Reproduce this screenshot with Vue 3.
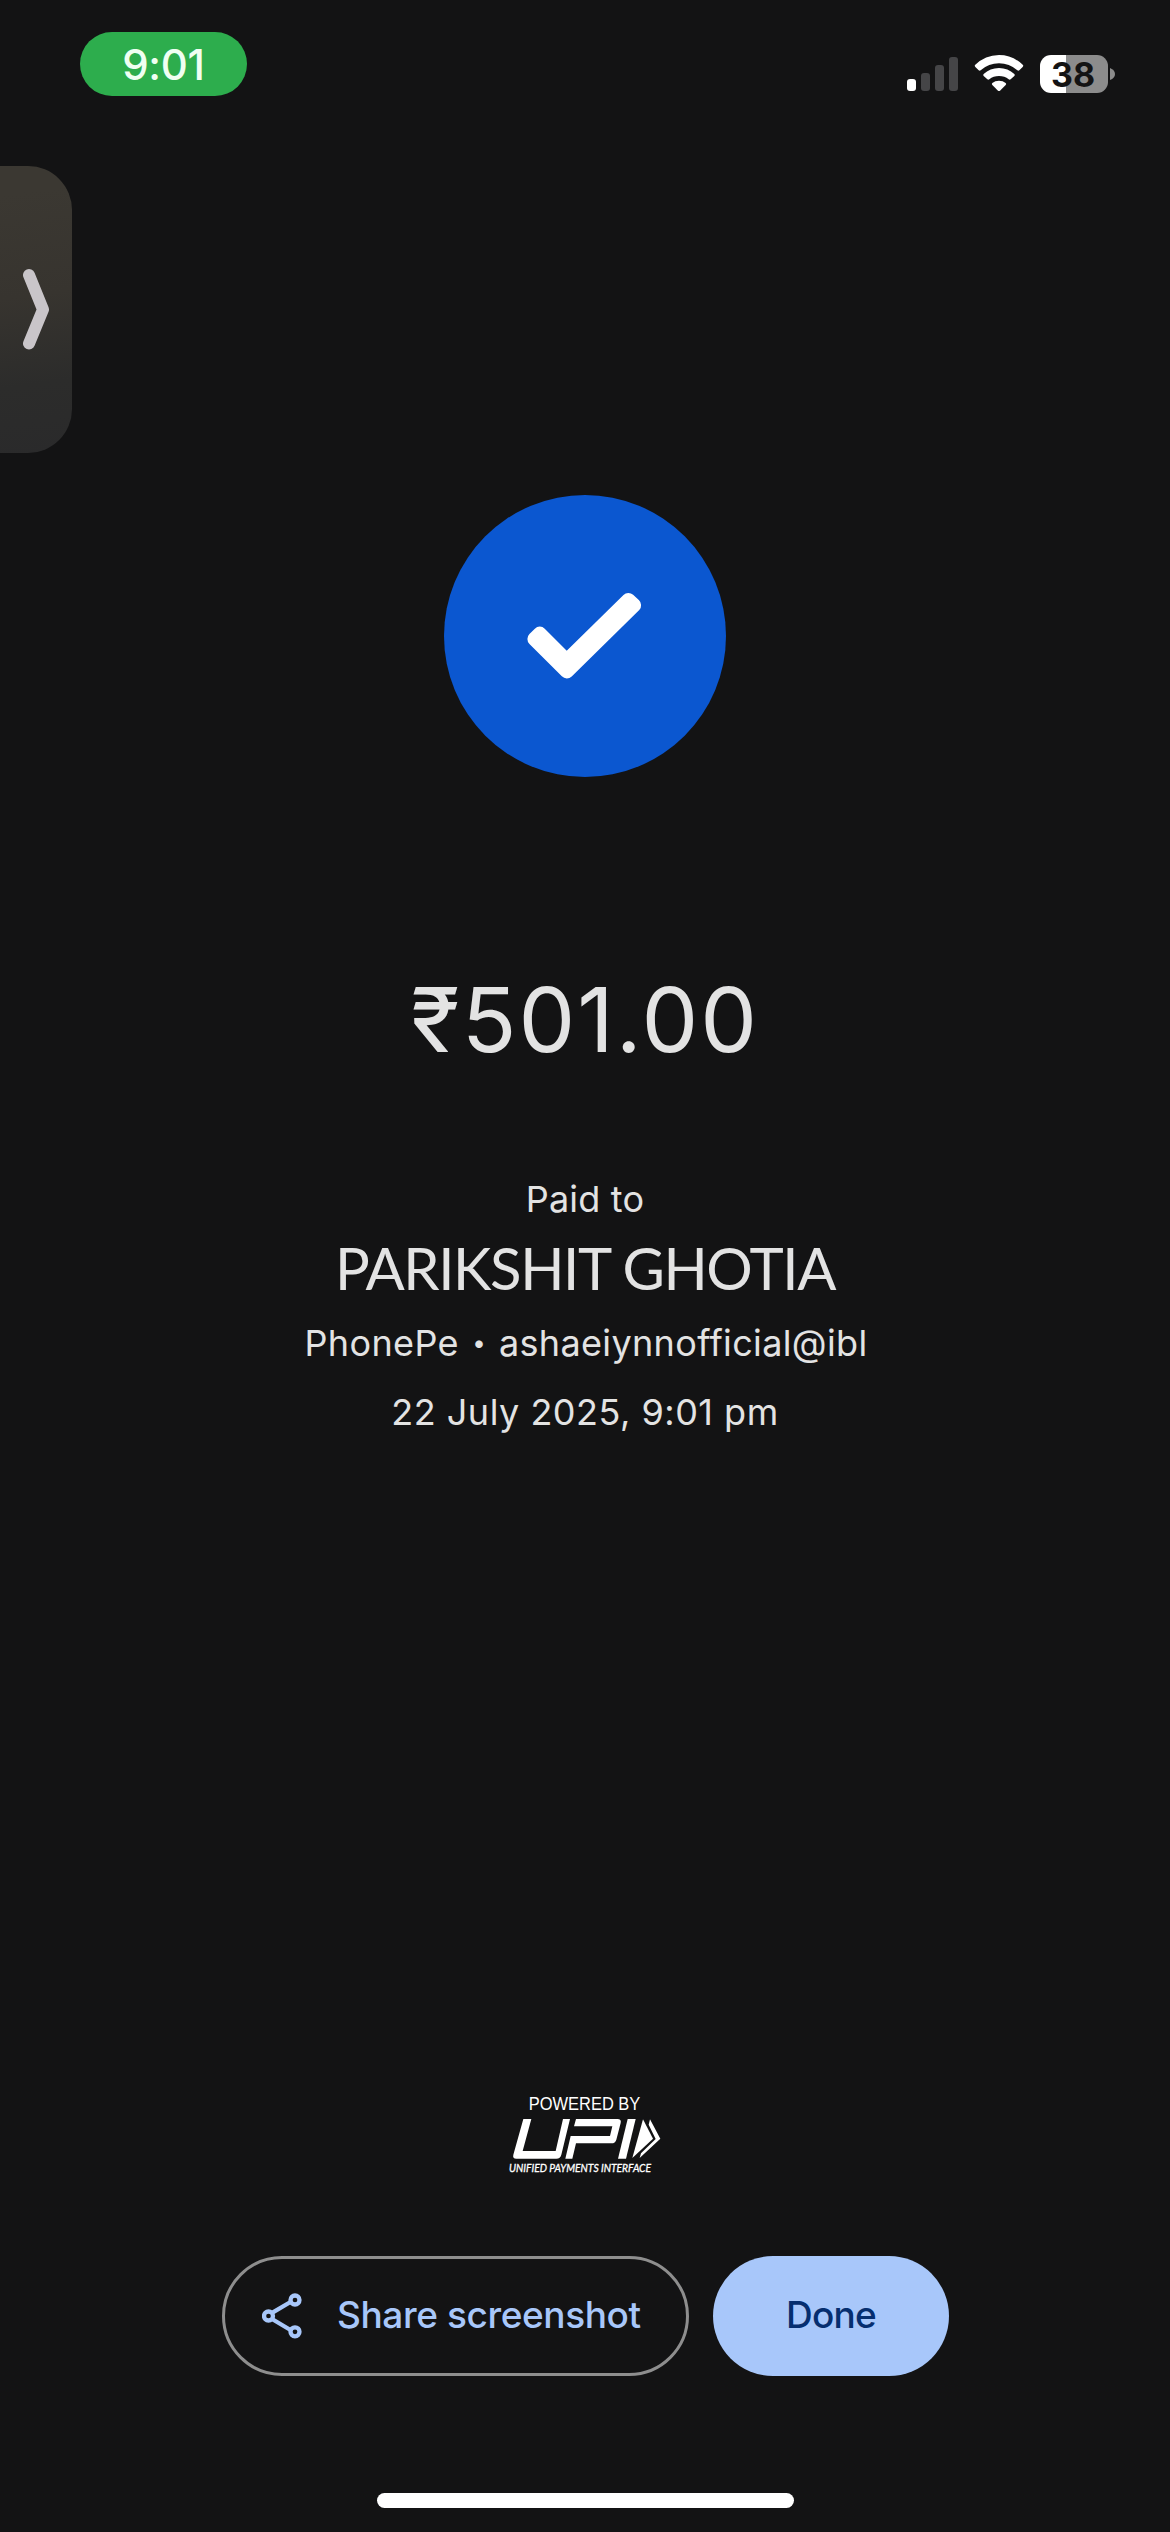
<script setup>
const bars = [
  { height: 12, on: true },
  { height: 18, on: false },
  { height: 26, on: false },
  { height: 34, on: false },
]
const payment = {
  amount: '₹501.00',
  name: 'PARIKSHIT GHOTIA',
  bank: 'PhonePe',
  account: 'ashaeiynnofficial@ibl',
  date: '22 July 2025, 9:01 pm',
}
</script>

<template>
  <div class="screen">
    <header class="status">
      <div class="clock"><span>9:01</span></div>
      <div class="indicators">
        <div class="signal">
          <i v-for="bar in bars" :key="bar.height" :class="{ on: bar.on }" :style="{ height: bar.height + 'px' }"></i>
        </div>
        <svg class="wifi" width="50" height="38" viewBox="0 0 150 114">
          <path d="M3 33Q34 3 75 3T147 33Q149 36 146 39L136 49Q133 51 130 49Q106 28 75 28T20 49Q17 51 14 49L4 39Q1 36 3 33Z" />
          <path d="M29 60Q48 42 75 42T121 60Q124 63 121 66L110 76Q107 78 104 76Q92 66 75 66T46 76Q43 78 40 76L29 66Q26 63 29 60Z" />
          <path d="M55 87Q63 80 75 80T95 87Q98 90 95 93L78 110Q75 112 72 110L55 93Q52 90 55 87Z" />
        </svg>
        <div class="battery"><span>38</span></div>
        <svg class="nub" width="5" height="12" viewBox="0 0 5 12"><path d="M0 0Q5 2 5 6T0 12Z" /></svg>
      </div>
    </header>

    <div class="handle">
      <svg width="30" height="84" viewBox="0 0 30 84"><path d="M7 7L21 41.500L7 75.500" /></svg>
    </div>

    <main class="receipt">
      <div class="badge">
        <svg width="282" height="282" viewBox="444.200 495 282 282">
          <path d="M534.600 639L540 633.600L567 660.600L628.600 600L634.300 605.200L567 671.400Z" />
        </svg>
      </div>
      <h1 class="amount">{{ payment.amount }}</h1>
      <p class="label">Paid to</p>
      <h2 class="name">{{ payment.name }}</h2>
      <p class="account"><span>{{ payment.bank }}</span><span class="dot">•</span><span>{{ payment.account }}</span></p>
      <p class="date">{{ payment.date }}</p>
    </main>

    <svg class="upi" width="190" height="110" viewBox="0 0 570 330">
      <text class="powered" x="116" y="90" textLength="335" lengthAdjust="spacingAndGlyphs">POWERED BY</text>
      <path d="M100 117H124L98 213H197L219 117H240L214 224Q211 236 199 236H79Q67 236 70 224Z" />
      <path d="M258 117H382Q395 117 392 129L379 179Q376 190 364 190H258L247 236H226L242 168H360L367 139H252Z" />
      <path d="M413 117H437L408 236H384Z" />
      <path d="M459 118L489 176L427 234Z" />
      <path d="M480 118L511 176L449 234L453 220L497 177L476 134Z" />
      <text class="unified" x="57" y="276" textLength="426" lengthAdjust="spacingAndGlyphs">UNIFIED PAYMENTS INTERFACE</text>
    </svg>

    <div class="actions">
      <button class="share">
        <svg width="42" height="46" viewBox="0 0 42 46">
          <path d="M10 19.800L28.500 9M10 26L28.500 37" />
          <circle cx="33" cy="7" r="4.500" />
          <circle cx="6.500" cy="23" r="4.500" />
          <circle cx="33" cy="38.800" r="4.500" />
        </svg>
        <span>Share screenshot</span>
      </button>
      <button class="done"><span>Done</span></button>
    </div>
    <div class="home"></div>
  </div>
</template>

<style>
body { background: #131314; }
</style>

<style scoped>
.screen {
  position: relative;
  width: 1170px;
  height: 2532px;
  overflow: hidden;
  background: #131314;
  color: #e3e3e3;
  font-family: Inter, "Noto Sans", sans-serif;
  display: flex;
  flex-direction: column;
  align-items: center;
}
.status {
  width: 100%;
  height: 165px;
  box-sizing: border-box;
  padding: 32px 55px 0 80px;
  display: flex;
  justify-content: space-between;
  align-items: flex-start;
}
.clock {
  width: 167px;
  height: 64px;
  border-radius: 32px;
  background: #2dad4d;
  color: #effff2;
  font-size: 42px;
  line-height: 65px;
  font-weight: 450;
  letter-spacing: -0.3px;
  text-align: center;
}
.indicators { display: flex; align-items: flex-start; padding-top: 23px; }
.signal { display: flex; align-items: flex-end; gap: 5px; height: 36px; }
.signal i { width: 9px; border-radius: 3px; background: #454547; }
.signal i.on { background: #fff; }
.wifi { margin: -1px 0 0 16px; fill: #fff; }
.battery {
  width: 68px;
  height: 38px;
  margin-left: 16px;
  border-radius: 11px;
  background: linear-gradient(90deg, #fff 26px, #8c8c8c 26px);
  color: #131314;
  font-size: 34px;
  line-height: 39px;
  font-weight: 700;
  text-align: center;
}
.battery span { margin-right: 2px; }
.nub { margin: 13px 0 0 2px; fill: #8c8c8c; }
.handle {
  position: absolute;
  left: 0;
  top: 166px;
  width: 72px;
  height: 287px;
  border-radius: 0 44px 44px 0;
  background: linear-gradient(172deg, #3b3832 10%, #37342f 45%, #2c2c2b 75%, #2a2a2b);
  display: flex;
  align-items: center;
}
.handle svg { margin-left: 22px; fill: none; stroke: #c9c5c9; stroke-width: 12; stroke-linecap: round; stroke-linejoin: round; }
.receipt { margin-top: 330px; display: flex; flex-direction: column; align-items: center; }
.badge { width: 282px; height: 282px; border-radius: 50%; background: #0b57d0; }
.badge svg { display: block; fill: #fff; stroke: #fff; stroke-width: 14; stroke-linejoin: round; }
.amount, .name, .label, .account, .date { margin: 0; font-weight: 400; white-space: nowrap; }
.amount { margin-top: 193px; font-size: 90px; line-height: 100px; letter-spacing: 2px; }
.label, .account, .date { font-size: 36px; line-height: 50px; letter-spacing: 0.5px; }
.label { margin-top: 104px; letter-spacing: 0.2px; }
.name { margin-top: 4px; font-family: Lato, sans-serif; font-size: 58px; line-height: 80px; letter-spacing: -1.4px; }
.account { margin-top: 10px; display: flex; letter-spacing: 0.35px; padding-left: 2px; }
.dot { width: 40px; text-align: center; font-size: 24px; line-height: 50px; letter-spacing: 0; }
.date { margin-top: 19px; }
.upi { margin-top: 643px; fill: #fff; display: block; }
.powered { font: 56px "Liberation Sans", Arial, sans-serif; }
.unified { font: italic 400 34px Lato, sans-serif; stroke: #fff; stroke-width: 1; }
.actions { margin-top: 66px; display: flex; gap: 24px; margin-left: 1px; }
.share, .done {
  box-sizing: border-box;
  height: 120px;
  border-radius: 60px;
  font: 500 37px/50px Inter, sans-serif;
  padding: 0;
  display: flex;
  align-items: center;
  white-space: nowrap;
}
.share { width: 467px; border: 3px solid #8e8e8e; background: none; color: #a8c7fa; padding-left: 37px; }
.share svg { fill: none; stroke: #a8c7fa; stroke-width: 4.300; }
.share span { margin-left: 33px; letter-spacing: -0.4px; }
.share span, .done span { padding-bottom: 3px; }
.done { width: 236px; border: 0; background: #a8c7fa; color: #062e6f; justify-content: center; letter-spacing: -0.8px; }
.home { margin-top: 117px; width: 417px; height: 15px; border-radius: 8px; background: #fff; }
</style>
